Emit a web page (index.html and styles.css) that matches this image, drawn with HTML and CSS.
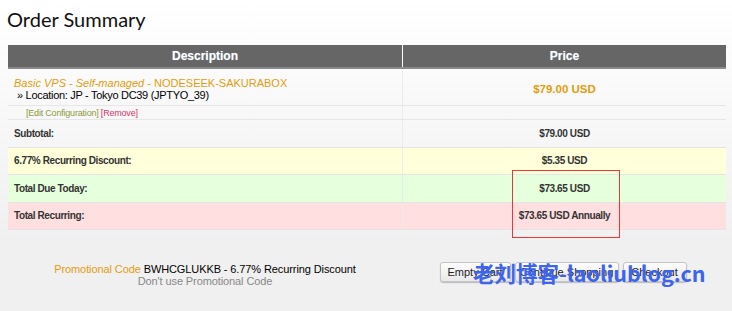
FILE: index.html
```html
<!DOCTYPE html>
<html lang="en">
<head>
    <meta charset="UTF-8">
    <title>Order Summary</title>
    <link rel="stylesheet" href="styles.css">
</head>
<body>
    <h1 class="title">Order Summary</h1>
    <table class="cart">
        <tr>
            <th>Description</th>
            <th>Price</th>
        </tr>
        <tr class="item">
            <td class="desc">
                <div class="product"><em>Basic VPS - Self-managed</em> - NODESEEK-SAKURABOX</div>
                <div class="option">&raquo; Location: JP - Tokyo DC39 (JPTYO_39)</div>
            </td>
            <td class="price">$79.00 USD</td>
        </tr>
        <tr class="links">
            <td><a class="edit" href="#">[Edit Configuration]</a> <a class="remove" href="#">[Remove]</a></td>
            <td></td>
        </tr>
        <tr class="sum">
            <td>Subtotal:</td>
            <td class="amount">$79.00 USD</td>
        </tr>
        <tr class="sum discount">
            <td>6.77% Recurring Discount:</td>
            <td class="amount">$5.35 USD</td>
        </tr>
        <tr class="sum today">
            <td>Total Due Today:</td>
            <td class="amount">$73.65 USD</td>
        </tr>
        <tr class="sum recurring">
            <td>Total Recurring:</td>
            <td class="amount">$73.65 USD Annually</td>
        </tr>
    </table>
    <div class="highlight"></div>

    <div class="bottom">
        <div class="promo">
            <div><span class="promo-label">Promotional Code</span> BWHCGLUKKB - 6.77% Recurring Discount</div>
            <a class="promo-remove" href="#">Don't use Promotional Code</a>
        </div>
        <div class="actions">
            <button class="btn-empty">Empty Cart</button>
            <button class="btn-continue">Continue Shopping</button>
            <button class="btn-checkout">Checkout</button>
        </div>
    </div>

    <div class="watermark">老刘博客-laoliublog.cn</div>
</body>
</html>
```

FILE: styles.css
```css
/* order summary page */
body {
    margin: 0;
    padding: 0 6px 0 8px;
    height: 311px;
    font-family: "Liberation Sans", Arial, sans-serif;
    font-size: 11px;
    color: #333;
    background: linear-gradient(to bottom, #ffffff 0px, #f0f0f0 240px, #f0f0f0 100%);
    position: relative;
}
.title {
    margin: 0 0 0 -1px;
    padding: 5px 0 0 0;
    height: 45px;
    box-sizing: border-box;
    font-family: Lato, sans-serif;
    font-size: 20px;
    font-weight: normal;
    color: #111;
    line-height: 28px;
}
.cart {
    width: 718px;
    border-collapse: collapse;
    table-layout: fixed;
}
.cart th {
    background-color: #666;
    color: #fff;
    font-size: 12px;
    font-weight: bold;
    height: 22px;
    padding: 0;
    border-bottom: 2px solid #8a8a8a;
    text-shadow: 0 0 1px #9ab;
}
.cart th:first-child {
    width: 394px;
    border-right: 1px solid #fff;
}
.cart td {
    padding: 0 6px;
    border-bottom: 1px solid #e6e6e6;
}
.cart td:first-child {
    border-right: 1px solid #ececec;
}
.item td {
    height: 33px;
    padding-top: 3px;
}
.desc {
    color: #000;
}
.product {
    color: #e39c0c;
    font-size: 11px;
}
.option {
    padding-left: 3px;
    font-size: 11px;
    letter-spacing: -0.3px;
}
.price {
    text-align: center;
    color: #e39c0c;
    font-weight: bold;
    font-size: 11.5px;
}
.links td {
    height: 13px;
    font-size: 9px;
    padding-left: 18px;
    letter-spacing: -0.2px;
}
.links a {
    text-decoration: none;
}
.edit {
    color: #8c9a3c;
}
.remove {
    color: #d6336c;
}
.sum td {
    height: 26.5px;
    font-weight: bold;
    font-size: 10px;
    letter-spacing: -0.4px;
    color: #333;
    border-bottom: 1px solid #e4e4e4;
}
.sum td:first-child {
    padding-left: 6px;
}
.amount {
    text-align: center;
}
.discount td {
    background-color: #ffffd9;
}
.today td {
    background-color: #e6ffdc;
}
.recurring td {
    background-color: #ffdfdf;
}
.highlight {
    position: absolute;
    left: 512px;
    top: 170px;
    width: 106px;
    height: 66px;
    border: 1px solid #e8383a;
}
.bottom {
    display: grid;
    grid-template-columns: 394px 324px;
    margin-top: 31px;
}
.promo {
    text-align: center;
    font-size: 11px;
    letter-spacing: -0.1px;
    color: #000;
    line-height: 12px;
    padding-top: 2px;
}
.promo-label {
    color: #e39c0c;
}
.promo-remove {
    color: #888;
    text-decoration: none;
}
.actions {
    display: flex;
    justify-content: center;
    gap: 4px;
    margin-left: -2px;
    padding-top: 1px;
}
.actions button {
    height: 20px;
    padding: 0;
    white-space: nowrap;
    font-family: "Liberation Sans", Arial, sans-serif;
    font-size: 11px;
    color: #222;
    background: linear-gradient(to bottom, #fdfdfd, #e9e9e9);
    border: 1px solid #c4c4c4;
    border-radius: 3px;
    box-shadow: 0 1px 1px #bbb;
}
.btn-empty {
    width: 71px;
}
.btn-continue {
    width: 104px;
}
.btn-checkout {
    width: 64px;
}
.watermark {
    position: absolute;
    left: 473px;
    top: 260px;
    font-family: "Noto Sans CJK SC", "Liberation Sans", sans-serif;
    font-weight: bold;
    font-size: 21.5px;
    line-height: 26px;
    color: #3d64f0;
}
```
